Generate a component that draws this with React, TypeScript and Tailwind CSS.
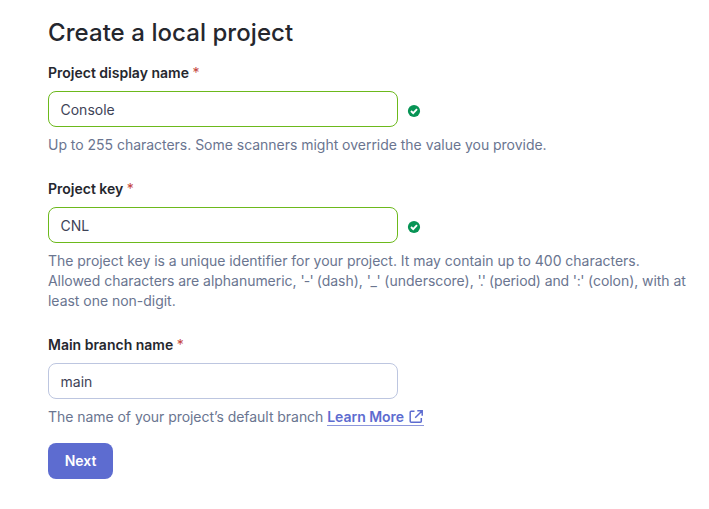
import React from "react";

function Check() {
  return (
    <svg className="mt-1 h-4 w-4 shrink-0" viewBox="0 0 16 16">
      <circle cx="8" cy="8" r="6.1" fill="#079455" />
      <path d="M5 8 7.2 10.1 11 6.1" fill="none" stroke="#fff" strokeWidth="1.9" />
    </svg>
  );
}

function Field({ label, value, valid, children }: { label: string; value: string; valid?: boolean; children: React.ReactNode }) {
  return (
    <div>
      <div className="text-sm font-[580] leading-5 text-[#25272e]">
        {label} <span className="font-normal text-[#c4453c]">*</span>
      </div>
      <div className="mt-2 flex items-center gap-2">
        <div className={`flex h-9 w-[350px] items-center rounded-lg border px-[11.5px] text-sm text-[#3e4357] ${valid ? "border-[#6cb91c]" : "border-[#bdc6e0]"}`}>
          <span className="mt-0.5">{value}</span>
        </div>
        {valid && <Check />}
      </div>
      <div className="mt-2 whitespace-nowrap text-sm leading-5 tracking-[-0.025px] text-[#6a7590]">{children}</div>
    </div>
  );
}

export default function App() {
  return (
    <main className="h-[509px] w-[709px] overflow-hidden bg-white pl-12 pt-[17px] font-['Inter',sans-serif]">
      <h1 className="text-2xl font-[550] leading-8 tracking-[0.06px] text-[#25272e]">Create a local project</h1>
      <div className="mt-3.5 flex flex-col gap-6">
        <Field label="Project display name" value="Console" valid>
          Up to 255 characters. Some scanners might override the value you provide.
        </Field>
        <Field label="Project key" value="CNL" valid>
          The project key is a unique identifier for your project. It may contain up to 400 characters.
          <br />
          <span className="tracking-[-0.035px]">Allowed characters are alphanumeric, </span>
          <span className="tracking-[-0.8px]">'-'</span> (dash),{" "}
          <span className="tracking-[-0.35px]">'_'</span> (underscore),{" "}
          <span className="tracking-[-0.85px]">'.'</span>
          <span className="tracking-[-0.12px]"> (period) and </span>
          <span className="tracking-[-0.35px]">':'</span>
          <span className="tracking-[-0.06px]"> (colon), with at</span>
          <br />
          least one non-digit.
        </Field>
        <Field label="Main branch name" value="main">
          <span className="tracking-[-0.045px]">The name of your project’s default branch </span>
          <a className="inline-flex h-[17px] items-center border-b border-[#8d97dc] font-semibold text-[#5d6cd0]">
            Learn More
            <svg className="ml-1 h-4 w-4" viewBox="0 0 16 16" fill="none" stroke="currentColor" strokeWidth="1.5">
              <path d="M6.5 2.2H3.2Q2.2 2.2 2.2 3.2V12.3Q2.2 13.3 3.2 13.3H12.3Q13.3 13.3 13.3 12.3V9M9.3 1.8H14.2V6.8M14 2 7.2 8.8" />
            </svg>
          </a>
        </Field>
      </div>
      <button className="mt-4 h-9 w-[65px] rounded-lg bg-[#5d6cd0] text-sm font-semibold text-white">Next</button>
    </main>
  );
}
